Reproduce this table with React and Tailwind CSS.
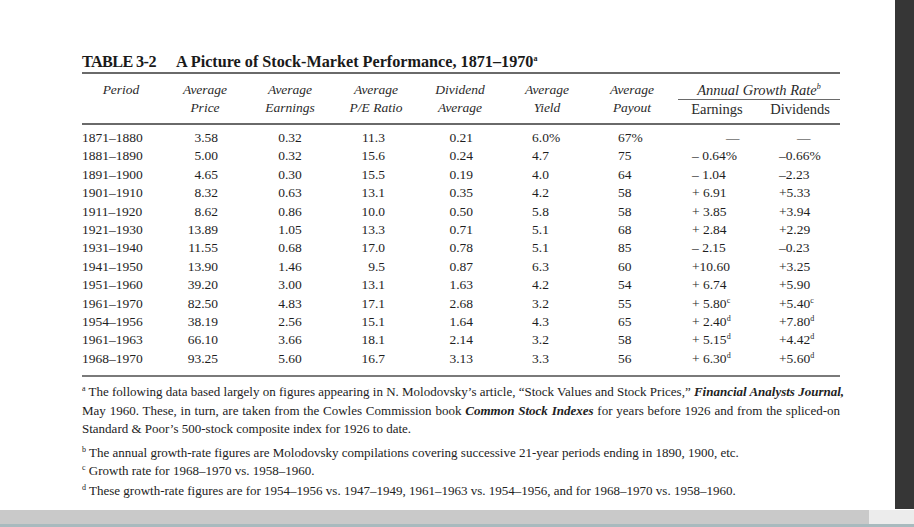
import React from 'react';

const rows = [
  ['1871–1880', '3.58', '0.32', '11.3', '0.21', '6.0%', '67%', null, null],
  ['1881–1890', '5.00', '0.32', '15.6', '0.24', '4.7', '75', ['– 0.64%'], ['–0.66%']],
  ['1891–1900', '4.65', '0.30', '15.5', '0.19', '4.0', '64', ['– 1.04'], ['–2.23']],
  ['1901–1910', '8.32', '0.63', '13.1', '0.35', '4.2', '58', ['+ 6.91'], ['+5.33']],
  ['1911–1920', '8.62', '0.86', '10.0', '0.50', '5.8', '58', ['+ 3.85'], ['+3.94']],
  ['1921–1930', '13.89', '1.05', '13.3', '0.71', '5.1', '68', ['+ 2.84'], ['+2.29']],
  ['1931–1940', '11.55', '0.68', '17.0', '0.78', '5.1', '85', ['– 2.15'], ['–0.23']],
  ['1941–1950', '13.90', '1.46', '9.5', '0.87', '6.3', '60', ['+10.60'], ['+3.25']],
  ['1951–1960', '39.20', '3.00', '13.1', '1.63', '4.2', '54', ['+ 6.74'], ['+5.90']],
  ['1961–1970', '82.50', '4.83', '17.1', '2.68', '3.2', '55', ['+ 5.80', 'c'], ['+5.40', 'c']],
  ['1954–1956', '38.19', '2.56', '15.1', '1.64', '4.3', '65', ['+ 2.40', 'd'], ['+7.80', 'd']],
  ['1961–1963', '66.10', '3.66', '18.1', '2.14', '3.2', '58', ['+ 5.15', 'd'], ['+4.42', 'd']],
  ['1968–1970', '93.25', '5.60', '16.7', '3.13', '3.3', '56', ['+ 6.30', 'd'], ['+5.60', 'd']],
];

const Sup = ({ children }) => (
  <span className="align-super text-[8px] leading-none">{children}</span>
);

const Growth = ({ value, dashPad }) => {
  if (!value) return <span className={dashPad}>—</span>;
  return (
    <span className="whitespace-pre">
      {value[0]}
      {value[1] && <Sup>{value[1]}</Sup>}
    </span>
  );
};

const grid =
  'grid grid-cols-[78px_90px_80px_92px_76px_98px_82px_78px_84px]';

export default function App() {
  return (
    <div
      className="w-[914px] h-[527px] flex flex-col bg-white overflow-hidden text-[#1e1e1e]"
      style={{ fontFamily: '"Liberation Serif", "Times New Roman", serif' }}
    >
      <div className="flex h-[510px]">
        <div className="w-[895px] pl-[82px]">
          <div className="w-[758px]">
            {/* title */}
            <div className="pt-[53px] text-[16.2px] leading-[19px] font-bold text-[#1a1a1a]">
              <span className="tracking-[-0.6px]">TABLE 3-2</span>
              <span className="ml-[20px]">
                A Picture of Stock-Market Performance, 1871–1970
              </span>
              <Sup>a</Sup>
            </div>
            <div className="h-[2px] bg-[#6a6a6a]" />

            {/* header */}
            <div className={`${grid} mt-[7px] pb-[5px] text-[13.5px] leading-[18px] italic text-[#2a2a2a]`}>
              <div className="text-center">Period</div>
              <div className="text-center">Average<br />Price</div>
              <div className="text-center">Average<br />Earnings</div>
              <div className="text-center">Average<br />P/E Ratio</div>
              <div className="text-center">Dividend<br />Average</div>
              <div className="text-center">Average<br />Yield</div>
              <div className="text-center pr-[10px]">Average<br />Payout</div>
              <div className="col-span-2">
                <div className="h-[18px] text-[14.5px] text-center border-b border-[#6a6a6a] box-content">
                  Annual Growth Rate<Sup>b</Sup>
                </div>
                <div className="grid grid-cols-[78px_84px] text-[14.5px] not-italic">
                  <div className="text-center">Earnings</div>
                  <div className="text-center pl-[4px]">Dividends</div>
                </div>
              </div>
            </div>
            <div className="h-[2px] bg-[#6a6a6a]" />

            {/* rows */}
            <div className="mt-[4px] text-[13.5px] leading-[18.4px]">
              {rows.map((r) => (
                <div key={r[0] + r[1]} className={grid}>
                  <div>{r[0]}</div>
                  <div className="text-right pr-[32px]">{r[1]}</div>
                  <div className="text-center">{r[2]}</div>
                  <div className="text-right pr-[37px]">{r[3]}</div>
                  <div className="text-right pr-[25px]">{r[4]}</div>
                  <div className="pl-[34px]">{r[5]}</div>
                  <div className="pl-[22px]">{r[6]}</div>
                  <div className="pl-[14px]">
                    <Growth value={r[7]} dashPad="pl-[34px]" />
                  </div>
                  <div className="pl-[23px]">
                    <Growth value={r[8]} dashPad="pl-[18px]" />
                  </div>
                </div>
              ))}
            </div>
            <div className="mt-[7px] h-[2px] bg-[#7a7a7a]" />

            {/* notes */}
            <div className="mt-[6px] text-[13px] leading-[18.5px] text-[#222]">
              <div className="whitespace-nowrap [text-align-last:justify]">
                <Sup>a</Sup> The following data based largely on figures appearing in N. Molodovsky’s article, “Stock Values and Stock Prices,” <i className="font-bold">Financial Analysts Journal,</i>
              </div>
              <div className="whitespace-nowrap [text-align-last:justify]">
                May 1960. These, in turn, are taken from the Cowles Commission book <i className="font-bold">Common Stock Indexes</i> for years before 1926 and from the spliced-on
              </div>
              <div>Standard &amp; Poor’s 500-stock composite index for 1926 to date.</div>
              <div className="mt-[5px]">
                <Sup>b</Sup> The annual growth-rate figures are Molodovsky compilations covering successive 21-year periods ending in 1890, 1900, etc.
              </div>
              <div>
                <Sup>c</Sup> Growth rate for 1968–1970 vs. 1958–1960.
              </div>
              <div className="mt-[1px]">
                <Sup>d</Sup> These growth-rate figures are for 1954–1956 vs. 1947–1949, 1961–1963 vs. 1954–1956, and for 1968–1970 vs. 1958–1960.
              </div>
            </div>
          </div>
        </div>
        <div className="w-[19px] h-[509px] bg-[#363636]" />
      </div>
      <div className="flex h-[14px]">
        <div className="w-[869px] bg-[#c9c9c9]" />
        <div className="flex-1 bg-[#ececec]" />
      </div>
      <div className="h-[3px] bg-[#a8babe]" />
    </div>
  );
}
